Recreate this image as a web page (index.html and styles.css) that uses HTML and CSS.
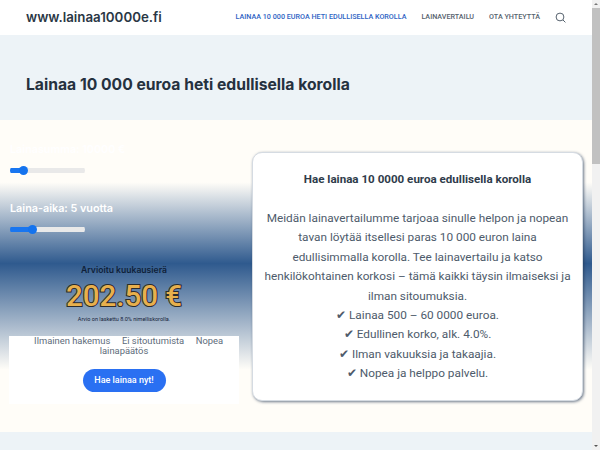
FILE: index.html
```html
<!DOCTYPE html>
<html lang="fi">
<head>
<meta charset="utf-8">
<title>www.lainaa10000e.fi</title>
<link rel="stylesheet" href="styles.css">
</head>
<body>
<header class="site-header">
  <a class="brand" href="#">www.lainaa10000e.fi</a>
  <nav class="nav">
    <a class="nav-link active" href="#">LAINAA 10 000 EUROA HETI EDULLISELLA KOROLLA</a>
    <a class="nav-link" href="#">LAINAVERTAILU</a>
    <a class="nav-link" href="#">OTA YHTEYTTÄ</a>
    <svg class="search" width="11" height="11" viewBox="0 0 11 11" fill="none" stroke="#56626e" stroke-width="1"><circle cx="5" cy="5" r="3.9"/><path d="M8 8l2.4 2.4"/></svg>
  </nav>
</header>
<section class="hero"><h1>Lainaa 10 000 euroa heti edullisella korolla</h1></section>
<main class="main">
  <div class="calc">
    <label class="calc-label">Lainasumma: 10000 €</label>
    <input class="range range-a" type="range" min="0" max="100" value="14">
    <label class="calc-label second">Laina-aika: 5 vuotta</label>
    <input class="range range-b" type="range" min="0" max="100" value="28">
    <div class="estimate">
      <div class="est-title">Arvioitu kuukausierä</div>
      <div class="est-value">202.50 €</div>
      <div class="est-note">Arvio on laskettu 8.0% nimelliskorolla.</div>
    </div>
    <div class="panel">
      <p class="perks">&nbsp;&nbsp;&nbsp;&nbsp;Ilmainen hakemus &nbsp;&nbsp;&nbsp; Ei sitoutumista &nbsp;&nbsp;&nbsp; Nopea lainapäätös</p>
      <a class="cta" href="#">Hae lainaa nyt!</a>
    </div>
  </div>
  <article class="card">
    <h2>Hae lainaa 10 0000 euroa edullisella korolla</h2>
    <p>Meidän lainavertailumme tarjoaa sinulle helpon ja nopean tavan löytää itsellesi paras 10 000 euron laina edullisimmalla korolla. Tee lainavertailu ja katso henkilökohtainen korkosi – tämä kaikki täysin ilmaiseksi ja ilman sitoumuksia.<br>
    ✔ Lainaa 500 – 60 0000 euroa.<br>
    ✔ Edullinen korko, alk. 4.0%.<br>
    ✔ Ilman vakuuksia ja takaajia.<br>
    ✔ Nopea ja helppo palvelu.</p>
  </article>
</main>
<section class="after"></section>
<div class="scrollbar" aria-hidden="true"><i class="arrow up"></i><i class="thumb"></i><i class="arrow down"></i></div>
</body>
</html>
```
FILE: styles.css
```css
* { box-sizing: border-box; }
html, body { margin: 0; padding: 0; }
body { font-family: Roboto, "Liberation Sans", sans-serif; background: #fff; padding-right: 8px; }
a { text-decoration: none; }

.site-header { height: 35px; background: #fff; display: flex; align-items: center; justify-content: space-between; padding: 0 26px; }
.brand { font-family: Inter, sans-serif; font-weight: 600; font-size: 13.3px; color: #2a3745; padding-bottom: 2px; }
.nav { display: flex; align-items: center; gap: 15px; }
.nav-link { font-size: 7.2px; font-weight: 500; color: #56626e; padding-bottom: 2px; }
.nav-link.active { color: #2f64c4; }
.search { display: block; }

.hero { height: 85px; background: #edf3f7; padding: 14px 26px 0; display: flex; align-items: center; }
.hero h1 { margin: 0; font-family: Inter, sans-serif; font-size: 15.7px; font-weight: 700; color: #25313f; }

.main { height: 312px; display: flex; align-items: flex-start; gap: 13px; padding: 23px 0 0 9px;
  background: linear-gradient(180deg, #fffdf8 0%, #fffdf8 20%, #2f5a8e 46%, #fffdf8 80%, #fffdf8 100%); }

.calc { width: 230px; flex: none; }
.calc-label { display: block; font-family: Inter, sans-serif; font-weight: 600; font-size: 10.8px; color: #fff; line-height: 14px; padding-left: 1px; }
.calc-label.second { margin-top: 26.5px; }
.range { -webkit-appearance: none; appearance: none; display: block; width: 75px; height: 9px; margin: 9px 0 0 1px; border-radius: 5px; outline: none; background-color: transparent; background-size: 100% 5px; background-position: center; background-repeat: no-repeat; }
.range-a { background-image: linear-gradient(90deg, #1976f0 0 19%, #e9e9e9 19% 100%); }
.range-b { background-image: linear-gradient(90deg, #1976f0 0 31%, #e9e9e9 31% 100%); }
.range::-webkit-slider-thumb { -webkit-appearance: none; width: 9px; height: 9px; border-radius: 50%; background: #1473ee; border: 0; }

.estimate { text-align: center; margin-top: 30.5px; }
.est-title { font-family: Inter, sans-serif; font-weight: 600; font-size: 8.6px; color: #0f1f38; line-height: 12px; }
.est-value { font-family: Roboto, sans-serif; font-weight: 500; font-size: 29.5px; line-height: 34px; margin-top: 3px; color: #e8b04d; -webkit-text-stroke: 2px #2b2b2b; paint-order: stroke fill; }
.est-note { font-size: 5.5px; color: #15233a; line-height: 8px; margin-top: 2px; }

.panel { background: #fff; margin-top: 13px; height: 68px; text-align: center; }
.perks { margin: 0; font-size: 9.4px; line-height: 10px; color: #5d6b7a; }
.cta { display: inline-block; margin-top: 13px; width: 83px; height: 23px; line-height: 23px; border-radius: 12px; background: #2a70f2; color: #fff; font-size: 9px; font-weight: 500; }

.card { width: 331px; flex: none; height: 249px; margin-top: 9px; background: #fff; border: 1px solid #d5dbe2; border-radius: 10px; box-shadow: 1px 1px 3px rgba(30,50,80,.65); padding: 19px 10px 0; text-align: center; color: #4e5b6b; }
.card h2 { margin: 0; font-size: 11.6px; line-height: 14px; font-weight: 700; color: #2f3c4b; }
.card p { margin: 23px 0 0; font-size: 11.8px; line-height: 19.4px; }

.after { height: 400px; background: #edf3f7; }

.scrollbar { position: fixed; top: 0; right: 0; bottom: 0; width: 8px; background: #f1f1f1; }
.thumb { position: absolute; top: 8px; left: 0; width: 8px; height: 156px; background: #c1c1c1; }
.arrow { position: absolute; left: 2px; width: 0; height: 0; border-left: 2px solid transparent; border-right: 2px solid transparent; }
.arrow.up { top: 3px; border-bottom: 2px solid #777; }
.arrow.down { bottom: 3px; border-top: 2px solid #555; }
```
